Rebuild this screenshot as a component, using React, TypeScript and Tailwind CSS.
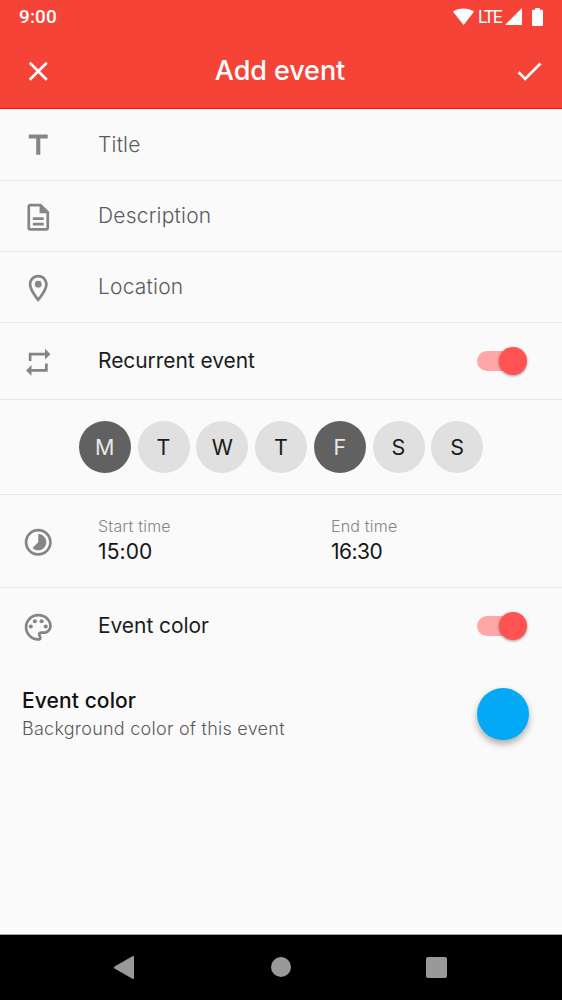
import type { ReactNode } from "react";
import { MdCheck, MdClose, MdRepeat, MdTimelapse, MdTitle } from "react-icons/md";

const days = [
  { label: "M", on: true },
  { label: "T", on: false },
  { label: "W", on: false },
  { label: "T", on: false },
  { label: "F", on: true },
  { label: "S", on: false },
  { label: "S", on: false },
];

function OutlineIcon({ d, children }: { d: string; children?: ReactNode }) {
  return (
    <svg viewBox="0 0 24 24" className="size-[32.5px]" fill="currentColor">
      <path d={d} />
      {children}
    </svg>
  );
}

function Leading({ children }: { children: ReactNode }) {
  return (
    <span className="flex w-[76px] shrink-0 items-center pl-[21.7px] pt-[1.5px] text-[#858585]">{children}</span>
  );
}

function Field({ icon, label, className }: { icon: ReactNode; label: string; className: string }) {
  return (
    <div className={`flex items-center border-b border-[#e7e7e7] ${className}`}>
      <Leading>{icon}</Leading>
      <span className="pl-[22px] text-[21px] leading-7 font-light tracking-[0.2px] text-[#5a5a5a]">{label}</span>
    </div>
  );
}

function Toggle() {
  return (
    <span className="flex h-5 w-[45px] items-center rounded-full bg-[#ffa6a6]">
      <span className="ml-[22px] size-[27.5px] shrink-0 rounded-full bg-[#ff5252] shadow-[0_1px_3px_rgba(0,0,0,0.4)]" />
    </span>
  );
}

function ToggleRow({ icon, label, className }: { icon: ReactNode; label: string; className: string }) {
  return (
    <div className={`flex items-center pr-10 ${className}`}>
      <Leading>{icon}</Leading>
      <span className="grow pl-[22px] text-[21px] leading-7 tracking-[-0.07px] text-[#1c1c1c]">{label}</span>
      <Toggle />
    </div>
  );
}

function Time({
  label,
  value,
  className,
  valueClassName,
}: {
  label: string;
  value: string;
  className: string;
  valueClassName: string;
}) {
  return (
    <div className={className}>
      <p className="text-[16px] leading-[22px] font-light tracking-[0.2px] text-[#858585]">{label}</p>
      <p className={`mt-px text-[21px] leading-7 text-[#151515] ${valueClassName}`}>{value}</p>
    </div>
  );
}

export default function App() {
  return (
    <div className="flex h-[1000px] w-[562px] flex-col overflow-hidden bg-[#fafafa] font-['Inter',sans-serif]">
      <header className="h-[109px] shrink-0 border-b border-[#ff0500] bg-[#f54337] text-white">
        <div className="flex h-[34px] items-center justify-between pl-[19px] pr-[19.5px] font-['Roboto',sans-serif]">
          <span className="text-[19px] leading-[34px] font-medium tracking-[0.15px]">9:00</span>
          <div className="flex items-center">
            <svg viewBox="0 0 21 17" className="mt-[-2px] h-[17px] w-[21px]" fill="currentColor">
              <path d="M0 3.7C6 -.6 15 -.6 21 3.7L10.6 17Z" />
            </svg>
            <span className="ml-[4.5px] w-[27px] text-[17.5px] leading-[34px] tracking-[-1.4px]">LTE</span>
            <svg viewBox="0 0 17 17" className="mt-[-1px] h-[17px] w-[17px]" fill="currentColor">
              <path d="M0 17 17 0V17Z" />
            </svg>
            <svg viewBox="0 0 11 18" className="ml-[9.5px] mt-[-1px] h-[18px] w-[11px]" fill="currentColor">
              <path d="M3.2 0h4.6v1.8H10a1 1 0 0 1 1 1V17a1 1 0 0 1-1 1H1a1 1 0 0 1-1-1V2.8a1 1 0 0 1 1-1h2.2Z" />
            </svg>
          </div>
        </div>
        <div className="flex h-[74px] items-center justify-between pl-[22px] pr-4">
          <MdClose className="size-[32.5px]" />
          <h1 className="-ml-2 text-[27px] leading-9 font-medium tracking-[-0.1px]">Add event</h1>
          <MdCheck className="size-[32.5px]" />
        </div>
      </header>

      <main className="grow">
        <Field icon={<MdTitle className="size-[32.5px]" />} label="Title" className="h-[72px]" />
        <Field
          icon={
            <OutlineIcon d="M8 16h8v2H8zm0-4h8v2H8zm6-10H6c-1.1 0-2 .9-2 2v16c0 1.1.89 2 1.99 2H18c1.1 0 2-.9 2-2V8l-6-6zm4 18H6V4h7v5h5v11z" />
          }
          label="Description"
          className="h-[71px]"
        />
        <Field
          icon={
            <OutlineIcon d="M12 2C8.13 2 5 5.13 5 9c0 5.25 7 13 7 13s7-7.75 7-13c0-3.87-3.13-7-7-7zM7 9c0-2.76 2.24-5 5-5s5 2.24 5 5c0 2.88-2.88 7.19-5 9.88C9.92 16.21 7 11.85 7 9z">
              <circle cx="12" cy="9" r="2.5" />
            </OutlineIcon>
          }
          label="Location"
          className="h-[71px]"
        />
        <ToggleRow
          icon={<MdRepeat className="size-[32.5px]" />}
          label="Recurrent event"
          className="h-[77px] border-b border-[#e7e7e7]"
        />

        <div className="flex h-[95px] items-center justify-center gap-[6.75px] border-b border-[#e7e7e7]">
          {days.map((day, i) => (
            <span
              key={i}
              className={`flex size-[52px] items-center justify-center rounded-full text-[21.5px] ${
                day.on ? "bg-[#616161] text-[#e8e8e8]" : "bg-[#e0e0e0] text-[#1c1c1c]"
              }`}
            >
              {day.label}
            </span>
          ))}
        </div>

        <div className="flex h-[93px] items-center border-b border-[#e7e7e7]">
          <Leading>
            <MdTimelapse className="size-[32.5px]" />
          </Leading>
          <Time label="Start time" value="15:00" className="ml-[22px] w-[233px] pb-0.5" valueClassName="tracking-[0.1px]" />
          <Time label="End time" value="16:30" className="pb-0.5" valueClassName="tracking-[-0.5px]" />
        </div>

        <ToggleRow
          icon={
            <OutlineIcon d="M12 22C6.49 22 2 17.51 2 12S6.49 2 12 2s10 4.04 10 9c0 3.31-2.69 6-6 6h-1.77c-.28 0-.5.22-.5.5 0 .12.05.23.13.33.41.47.64 1.06.64 1.67A2.5 2.5 0 0 1 12 22zm0-18c-4.41 0-8 3.59-8 8s3.59 8 8 8c.28 0 .5-.22.5-.5a.54.54 0 0 0-.14-.35c-.41-.46-.63-1.05-.63-1.65a2.5 2.5 0 0 1 2.5-2.5H16c2.21 0 4-1.79 4-4 0-3.86-3.59-7-8-7z">
              <circle cx="6.5" cy="11.5" r="1.5" />
              <circle cx="9.5" cy="7.5" r="1.5" />
              <circle cx="14.5" cy="7.5" r="1.5" />
              <circle cx="17.5" cy="11.5" r="1.5" />
            </OutlineIcon>
          }
          label="Event color"
          className="h-[76px]"
        />

        <div className="flex items-start justify-between pl-[22px] pr-[33px] pt-[23px]">
          <div>
            <h2 className="text-[21px] leading-7 font-medium tracking-[0.1px] text-[#111]">Event color</h2>
            <p className="text-[18px] leading-7 font-light tracking-[0.25px] text-[#5a5a5a]">
              Background color of this event
            </p>
          </div>
          <span className="mt-[0.5px] size-[52px] rounded-full bg-[#03a9f4] shadow-[0_4px_7px_rgba(0,0,0,0.32)]" />
        </div>
      </main>

      <div className="h-[2px] shrink-0 border-b border-[#9fa5a4] bg-white" />
      <nav className="flex h-[65px] shrink-0 items-center justify-between bg-black pb-px pl-[114px] pr-[115px] text-[#999]">
        <svg viewBox="0 0 20 23" className="h-[23px] w-5" fill="currentColor">
          <path d="M.6 10.6 18.4.3Q20 -.4 20 1.3V21.7Q20 23.4 18.4 22.7L.6 12.4Q-.6 11.5.6 10.6Z" />
        </svg>
        <span className="ml-px size-5 rounded-full bg-[#999]" />
        <span className="size-[21px] rounded-[2px] bg-[#999]" />
      </nav>
    </div>
  );
}
